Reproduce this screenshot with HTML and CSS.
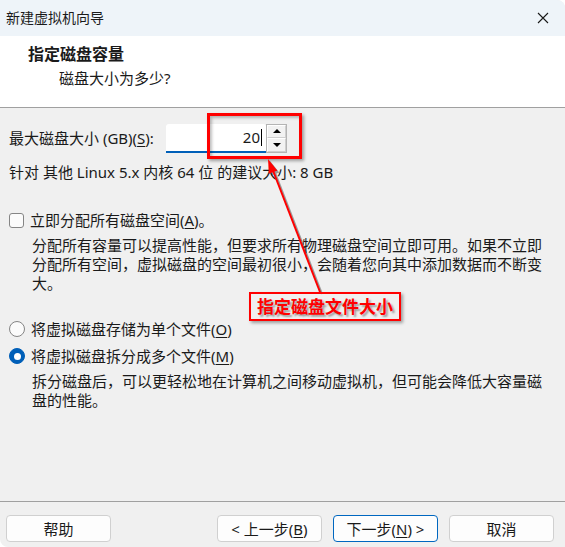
FILE: index.html
```html
<!DOCTYPE html>
<html lang="zh-CN">
<head>
    <meta charset="UTF-8">
    <title>新建虚拟机向导</title>
    <link rel="stylesheet" href="styles.css">
</head>
<body>
    <div class="window">
        <div class="titlebar">
            <span class="title">新建虚拟机向导</span>
            <svg class="close" width="12" height="12" viewBox="0 0 12 12"><path d="M1 1 L11 11 M11 1 L1 11" stroke="#1a1a1a" stroke-width="1.1" fill="none"/></svg>
        </div>

        <div class="header">
            <div class="head-title">指定磁盘容量</div>
            <div class="head-sub">磁盘大小为多少?</div>
        </div>

        <div class="content">
            <div class="size-row">
                <label class="size-label">最大磁盘大小 (GB)(<u>S</u>):</label>
                <div class="spin-input">
                    <div class="field"><span class="value">20</span><span class="caret"></span></div>
                    <div class="spin">
                        <div class="spin-btn"><span class="tri-up"></span></div>
                        <div class="spin-btn"><span class="tri-down"></span></div>
                    </div>
                </div>
            </div>
            <div class="hint">针对 其他 Linux 5.x 内核 64 位 的建议大小: 8 GB</div>

            <div class="option option-first">
                <span class="checkbox"></span>
                <span>立即分配所有磁盘空间(<u>A</u>)。</span>
            </div>
            <p class="desc">分配所有容量可以提高性能，但要求所有物理磁盘空间立即可用。如果不立即分配所有空间，虚拟磁盘的空间最初很小，会随着您向其中添加数据而不断变大。</p>

            <div class="option option-radio">
                <span class="radio"></span>
                <span>将虚拟磁盘存储为单个文件(<u>O</u>)</span>
            </div>
            <div class="option option-radio2">
                <span class="radio checked"></span>
                <span>将虚拟磁盘拆分成多个文件(<u>M</u>)</span>
            </div>
            <p class="desc">拆分磁盘后，可以更轻松地在计算机之间移动虚拟机，但可能会降低大容量磁盘的性能。</p>
        </div>

        <div class="footer">
            <button class="btn">帮助</button>
            <div class="spacer"></div>
            <button class="btn">&lt; 上一步(<u>B</u>)</button>
            <button class="btn primary">下一步(<u>N</u>) &gt;</button>
            <button class="btn">取消</button>
        </div>

        <!-- annotations drawn over the dialog -->
        <div class="mark-box"></div>
        <svg class="arrow" width="565" height="547" viewBox="0 0 565 547">
            <g transform="translate(2,2)" opacity="0.35">
                <line x1="320" y1="292" x2="272" y2="168" stroke="#000" stroke-width="2"/>
                <polygon points="268,159 277.3,170.4 268.9,173.7" fill="#000"/>
            </g>
            <line x1="320" y1="292" x2="272" y2="168" stroke="#ff0000" stroke-width="2"/>
            <polygon points="268,159 277.3,170.4 268.9,173.7" fill="#ff0000"/>
        </svg>
        <div class="mark-label">指定磁盘文件大小</div>
    </div>
</body>
</html>
```

FILE: styles.css
```css
* { box-sizing: border-box; margin: 0; padding: 0; }
body { width: 565px; height: 547px; overflow: hidden; background: #ffffff; font-family: "Noto Sans", "Noto Sans CJK SC", sans-serif; color: #1a1a1a; }

.window { position: relative; width: 565px; height: 547px; display: flex; flex-direction: column; background: #f0f0f0; border-radius: 0 8px 0 8px; overflow: hidden; }

.titlebar { height: 36px; flex: none; display: flex; align-items: center; justify-content: space-between; padding: 0 16px 0 6px; background: #eef4f9; }
.title { font-size: 14px; line-height: 20px; }
.close { display: block; }

.header { height: 72px; flex: none; background: #ffffff; border-bottom: 1px solid #a0a0a0; padding: 7px 0 0 28px; }
.head-title { font-size: 16px; font-weight: bold; line-height: 22px; }
.head-sub { font-size: 15px; line-height: 22px; padding-left: 31px; margin-top: 2px; }

.content { flex: 1; padding: 15px 9px 0 9px; font-size: 15px; line-height: 20px; }
u { text-decoration: underline; text-underline-offset: 2px; }

.size-row { display: flex; align-items: center; height: 30px; }
.size-label { width: 157px; white-space: nowrap; }
.spin-input { display: flex; align-items: center; }
.field { width: 100px; height: 29px; background: #ffffff; border-bottom: 2px solid #005fb8; display: flex; align-items: center; justify-content: flex-end; padding-right: 4px; border-radius: 3px 3px 0 0; }
.value { line-height: 20px; }
.caret { width: 1px; height: 17px; background: #000; margin-left: 1px; }
.spin { width: 21px; height: 29px; border: 1px solid #b4b4b4; display: flex; flex-direction: column; background: #e6e6e6; }
.spin-btn { flex: 1; display: flex; align-items: center; justify-content: center; border: 1px solid #ffffff; border-right-color: #cfcfcf; border-bottom-color: #cfcfcf; background: #f2f2f2; }
.tri-up { width: 0; height: 0; border-left: 4px solid transparent; border-right: 4px solid transparent; border-bottom: 4px solid #000; }
.tri-down { width: 0; height: 0; border-left: 4px solid transparent; border-right: 4px solid transparent; border-top: 4px solid #000; }

.hint { margin-top: 9px; }

.option { display: flex; align-items: center; gap: 6px; height: 20px; }
.option-first { margin-top: 28px; }
.option-radio { margin-top: 26px; }
.option-radio2 { margin-top: 7px; }
.checkbox { width: 15px; height: 15px; border: 1px solid #858585; border-radius: 3px; background: #fbfbfb; flex: none; }
.radio { width: 16px; height: 16px; border: 1px solid #858585; border-radius: 50%; background: #fbfbfb; flex: none; display: flex; align-items: center; justify-content: center; }
.radio.checked { background: #005fb8; border-color: #005fb8; }
.radio.checked::after { content: ""; width: 7px; height: 7px; border-radius: 50%; background: #ffffff; }

.desc { padding-left: 23px; padding-right: 12px; margin-top: 6px; line-height: 19px; }

.footer { height: 46px; flex: none; border-top: 1px solid #a0a0a0; display: flex; gap: 11px; padding: 13px 11px 5px 6px; }
.spacer { flex: 1; }
.btn { width: 105px; height: 27px; border: 1px solid #d0d0d0; border-radius: 4px; background: #fdfdfd; font-family: "Noto Sans", "Noto Sans CJK SC", sans-serif; font-size: 15px; line-height: 20px; color: #1a1a1a; }
.btn.primary { border-color: #0067c0; }

.mark-box { position: absolute; left: 207px; top: 113px; width: 95px; height: 46px; border: 3px solid #ff0000; box-shadow: 2px 2px 3px rgba(0, 0, 0, 0.35), inset 2px 2px 3px rgba(0, 0, 0, 0.25); }
.arrow { position: absolute; left: 0; top: 0; pointer-events: none; }
.mark-label { position: absolute; left: 249px; top: 292px; width: 152px; height: 29px; border: 2px solid #ff0000; color: #ff0000; font-size: 17px; font-weight: bold; line-height: 25px; text-align: center; text-shadow: 2px 2px 2px rgba(0, 0, 0, 0.35); box-shadow: 2px 2px 3px rgba(0, 0, 0, 0.35); }
```
